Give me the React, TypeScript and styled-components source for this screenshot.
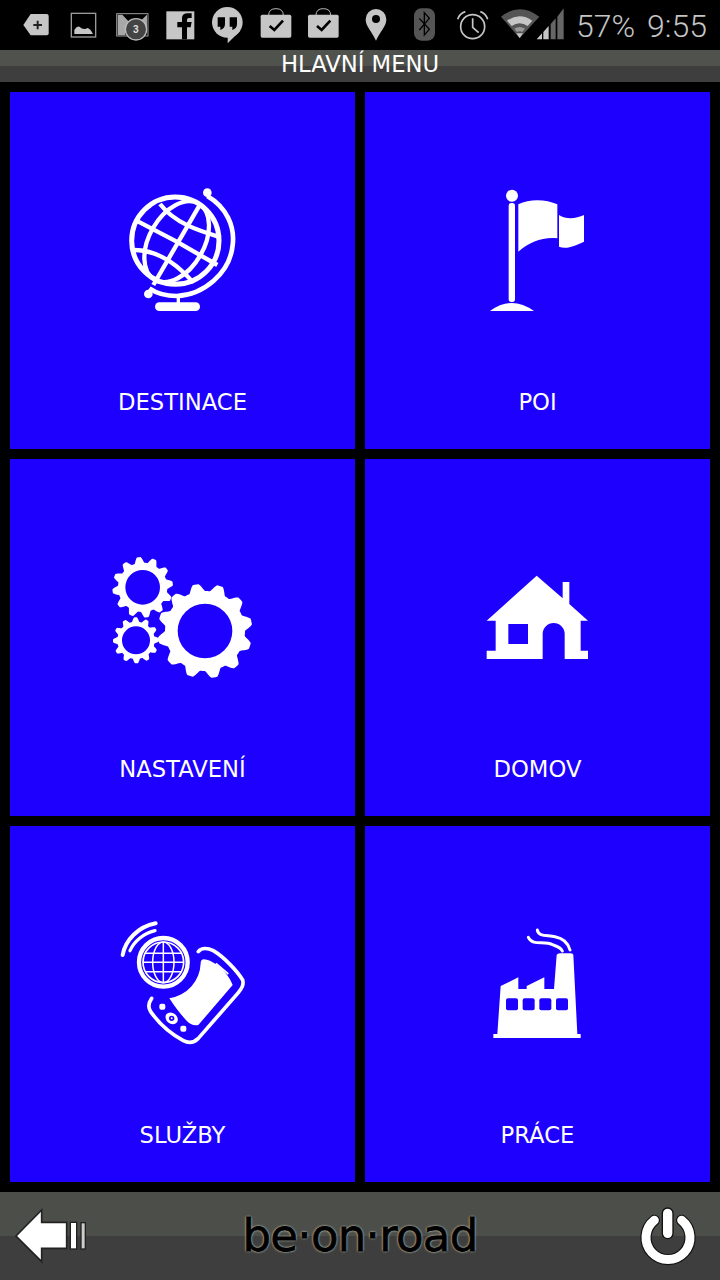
import React from "react";
import styled, { createGlobalStyle } from "styled-components";

const Global = createGlobalStyle`
  html, body { margin: 0; padding: 0; background: #000; }
  #root { width: 720px; height: 1280px; overflow: hidden; }
`;
const Page = styled.div`
  width: 720px; height: 1280px; display: flex; flex-direction: column; background: #000;
  font-family: "DejaVu Sans", sans-serif;
`;
const StatusBar = styled.div`
  height: 50px; display: flex; align-items: flex-start; padding: 0 13px 0 18px; flex: none;
  svg { display: block; overflow: visible; flex: none; }
`;
const StatusText = styled.div`
  margin-left: auto; display: flex; gap: 12px; height: 50px; align-items: center;
  font: 300 32px Roboto, sans-serif; color: #c4c4c4; padding-top: 2px; box-sizing: border-box;
`;
const Header = styled.div`
  height: 32px; flex: none; display: flex; align-items: center; justify-content: center;
  background: linear-gradient(#50524e 0 50%, #3e3e3e 50% 100%);
  color: #fff; font-size: 22.7px; line-height: 28px; padding-bottom: 5px; box-sizing: border-box;
`;
const Grid = styled.div`
  flex: none; display: grid; grid-template-columns: 345px 345px; grid-template-rows: 357px 357px 356px;
  gap: 10px; padding: 10px;
`;
const Tile = styled.div`
  background: #1e00ff; display: flex; flex-direction: column; align-items: center;
  padding: 71px 0 33px; box-sizing: border-box;
`;
const TileIcon = styled.svg`
  display: block; width: 160px; height: 160px; flex: none;
`;
const TileLabel = styled.div`
  margin-top: auto; color: #fff; font-size: 22.7px; line-height: 28px;
`;
const BottomBar = styled.div`
  flex: none; height: 88px; display: grid; grid-template-columns: 1fr auto 1fr; align-items: center;
  padding: 0 12px; background: linear-gradient(#4c4e4a 0 50%, #3e3e3e 50% 100%);
`;
const BackIcon = styled.svg`
  display: block; width: 80px; height: 64px; justify-self: start;
`;
const PowerIcon = styled.svg`
  display: block; width: 76px; height: 72px; justify-self: end;
`;
const Logo = styled.div`
  font: 400 45px "DejaVu Sans", sans-serif; color: #000; letter-spacing: -0.7px; line-height: 56px;
  -webkit-text-stroke: 0.8px #000;
  text-shadow: 0 0 1px #b4b8a8, 0 0 2px #b4b8a8, 0 0 2px #b4b8a8, 0 0 3px #a0a494;
`;

const G = "#c6c6c6";

const Slice = ({ a, b, children }: { a: number; b: number; children: React.ReactNode }) => (
  <svg width={(b - a) / 3} height={50} viewBox={`${a} 0 ${b - a} 150`}>{children}</svg>
);

const Bag = ({ x }: { x: number }) => (
  <>
    <rect x={x} y={44} width={92} height={69} rx={5} fill={G} />
    <path d={`M${x + 24} 46 Q${x + 24} 26 ${x + 46} 26 Q${x + 68} 26 ${x + 68} 46`} fill="none" stroke="#bbb" strokeWidth={3} />
    <path d={`M${x + 27} 78 L${x + 41} 90 L${x + 67} 62`} fill="none" stroke="#000" strokeWidth={8} />
  </>
);

const gear = (cx: number, cy: number, R: number, r: number, hole: number, phase: number) => {
  const pts: string[] = [];
  for (let i = 0; i < 360; i++) {
    const t = (i * Math.PI) / 180;
    const w = Math.cos(12 * (t + phase));
    const f = Math.min(1, Math.max(0, 0.5 + w * 0.7));
    const rad = r + (R - r) * f;
    pts.push(`${(cx + rad * Math.cos(t)).toFixed(1)} ${(cy + rad * Math.sin(t)).toFixed(1)}`);
  }
  return `M${pts.join("L")}Z M${cx - hole} ${cy} a${hole} ${hole} 0 1 0 ${hole * 2} 0 a${hole} ${hole} 0 1 0 ${-hole * 2} 0Z`;
};

const W = "#fff";

const GlobeArt = () => (
  <TileIcon viewBox="-21 -21 480 480">
    <g fill="none" stroke={W} strokeWidth={13}>
      <circle cx={196} cy={212} r={131} strokeWidth={15} />
      <path d="M292 78 C350 112 375 170 368 225 C360 310 280 375 200 378 C170 378 140 370 118 355" strokeWidth={14} />
      <path d="M272 100 L130 345" />
      <ellipse cx={200} cy={215} rx={82} ry={132} transform="rotate(30 200 215)" />
      <path d="M85 155 L200 215 L322 285" />
      <path d="M150 102 C195 160 265 182 332 202" />
      <path d="M72 240 C140 240 200 280 250 338" />
    </g>
    <circle cx={292} cy={68} r={13} fill={W} />
    <circle cx={115} cy={372} r={13} fill={W} />
    <rect x={200} y={378} width={10} height={24} fill={W} />
    <rect x={135} y={397} width={135} height={26} rx={13} fill={W} />
  </TileIcon>
);

const FlagArt = () => (
  <TileIcon viewBox="-36 -21 480 480">
    <g fill={W}>
      <circle cx={126} cy={77} r={18} />
      <rect x={116} y={99} width={19} height={297} rx={8} />
      <path d="M60 423 Q125 375 192 423 Z" />
      <path d="M145 103 C180 85 230 88 262 103 L262 205 C220 200 180 215 145 245 Z" />
      <path d="M267 135 C290 150 320 145 342 135 L342 215 C320 225 290 240 267 230 Z" />
    </g>
  </TileIcon>
);

const GearsArt = () => (
  <TileIcon viewBox="9 -45 480 480">
    <g fill={W} fillRule="evenodd">
      <path d={gear(128, 127, 91, 74, 52, 0.13)} />
      <path d={gear(108, 286, 69, 56, 42, 0.02)} />
      <path d={gear(315, 258, 142, 120, 82, 0.2)} />
    </g>
  </TileIcon>
);

const HouseArt = () => (
  <TileIcon viewBox="-36 -90 480 480">
    <path
      fill={W}
      fillRule="evenodd"
      d="M50 182 L200 47 L278 115 V66 H298 V132 L354 182 H332 V272 H354 V297 H284 V222 A33 33 0 0 0 218 222 V297 H50 V272 H77 V182 Z M115 192 V252 H174 V192 Z"
    />
  </TileIcon>
);

const ServicesArt = () => (
  <TileIcon viewBox="-21 -39 480 480">
    <g fill="none" stroke={W}>
      <path d="M38 135 C46 90 85 50 137 40" strokeWidth={12} strokeLinecap="round" />
      <path d="M60 122 C72 95 100 70 135 62" strokeWidth={10} strokeLinecap="round" />
      <circle cx={160} cy={157} r={73} strokeWidth={13} />
      <g strokeWidth={4.5}>
        <circle cx={160} cy={157} r={61} strokeWidth={5} />
        <ellipse cx={160} cy={157} rx={32} ry={61} />
        <path d="M160 96 V218 M105 130 H215 M99 157 H221 M105 185 H215" />
      </g>
      <path
        d="M265 125 C275 112 295 115 310 122 C340 140 380 180 398 210 C402 225 395 235 385 248 L265 385 C250 400 235 400 220 392 C180 370 150 345 122 305 C112 290 118 275 125 265"
        strokeWidth={11}
        strokeLinecap="round"
      />
      <path d="M318 160 L355 192" strokeWidth={5} />
    </g>
    <path fill={W} d="M280 148 C315 150 355 190 368 225 L265 345 C250 348 240 342 230 332 C215 317 195 292 178 265 A110 110 0 0 0 272 160 Q272 150 280 148 Z" />
    <rect x={148} y={281} width={18} height={18} rx={6} fill={W} />
    <rect x={211} y={347} width={18} height={18} rx={6} fill={W} />
    <ellipse cx={185} cy={325} rx={20} ry={16} fill={W} transform="rotate(40 185 325)" />
    <ellipse cx={185} cy={325} rx={8} ry={8} fill="#1e00ff" />
    <circle cx={185} cy={325} r={3} fill={W} />
  </TileIcon>
);

const FactoryArt = () => (
  <TileIcon viewBox="-66 -69 480 480">
    <path fill={W} d="M62 198 L115 172 V207 H140 V198 L193 172 V207 H222 L230 105 Q232 100 240 100 H272 Q280 100 280 105 L292 342 H302 V354 H40 V342 H52 Z" />
    <g fill="#1e00ff">
      <rect x={78} y={235} width={36} height={36} rx={6} />
      <rect x={128} y={235} width={36} height={36} rx={6} />
      <rect x={178} y={235} width={36} height={36} rx={6} />
      <rect x={228} y={235} width={36} height={36} rx={6} />
    </g>
    <g fill="none" stroke={W} strokeLinecap="round" strokeWidth={9}>
      <path d="M172 30 C175 50 200 45 225 50 C250 55 265 70 270 90" />
      <path d="M145 52 C160 80 190 60 220 75 C235 80 245 88 247 93" />
    </g>
  </TileIcon>
);

const tiles = [
  { label: "DESTINACE", Art: GlobeArt },
  { label: "POI", Art: FlagArt },
  { label: "NASTAVENÍ", Art: GearsArt },
  { label: "DOMOV", Art: HouseArt },
  { label: "SLUŽBY", Art: ServicesArt },
  { label: "PRÁCE", Art: FactoryArt },
];

export default function App() {
  return (
    <Page>
      <Global />
      <StatusBar>
        <Slice a={54} b={190}>
          <path d="M70 75 L92 42 H140 Q146 42 146 48 V100 Q146 106 140 106 H92 Z" fill={G} />
          <path d="M100 72 H126 V78 H100 Z M110 62 H116 V88 H110 Z" fill="#222" />
        </Slice>
        <Slice a={190} b={320}>
          <rect x={215} y={40} width={73} height={71} fill="none" stroke="#9a9a9a" strokeWidth={4} />
          <path d="M224 102 V90 Q235 72 245 85 Q255 90 264 84 Q272 86 280 102 Z" fill={G} />
        </Slice>
        <Slice a={320} b={470}>
          <rect x={349} y={41} width={94} height={67} fill="none" stroke="#9a9a9a" strokeWidth={3} />
          <path d="M352 44 H366 L398 78 L375 100 V106 H352 Z M440 44 L415 68 L440 90 Z" fill="#a8a8a8" />
          <circle cx={407} cy={88} r={32} fill="#444" stroke="#bbb" strokeWidth={4} />
          <text x={407} y={100} textAnchor="middle" fontFamily="Roboto, sans-serif" fontWeight={700} fontSize={30} fill="#ddd">3</text>
        </Slice>
        <Slice a={470} b={610}>
          <rect x={498} y={34} width={84} height={84} fill={G} />
          <path d="M545 118 V82 H531 V66 H545 V54 Q545 40 562 40 H574 V54 H566 Q560 54 560 60 V66 H574 L571 82 H560 V118 Z" fill="#000" />
        </Slice>
        <Slice a={610} b={755}>
          <circle cx={683} cy={67} r={46} fill={G} />
          <path d="M684 105 V130 L722 92 Z" fill={G} />
          <path d="M654 52 H676 V72 Q676 86 662 90 V80 H654 Z M690 52 H712 V72 Q712 86 698 90 V80 H690 Z" fill="#000" />
        </Slice>
        <Slice a={755} b={895}><Bag x={781} /></Slice>
        <Slice a={895} b={1040}><Bag x={925} /></Slice>
        <Slice a={1040} b={1200}>
          <path fillRule="evenodd" fill={G} d="M1127 122 C1115 95 1096 80 1096 58 A31 31 0 0 1 1158 58 C1158 80 1139 95 1127 122 Z M1115 57 A12 12 0 0 0 1139 57 A12 12 0 0 0 1115 57 Z" />
        </Slice>
        <Slice a={1200} b={1340}>
          <rect x={1242} y={25} width={63} height={97} rx={22} fill="#555" />
          <path d="M1258 55 L1288 88 L1273 105 V38 L1288 55 L1258 90" fill="none" stroke="#000" strokeWidth={4} />
        </Slice>
        <Slice a={1340} b={1490}>
          <g fill="none" stroke={G} strokeWidth={5}>
            <circle cx={1417} cy={80} r={36} />
            <path d="M1417 55 V82 L1435 98" />
            <path d="M1372 58 Q1378 40 1395 35 M1462 58 Q1456 40 1440 35" />
          </g>
        </Slice>
        <Slice a={1490} b={1605}>
          <path d="M1502 50 Q1558 5 1617 50 L1558 115 Z" fill="#555" />
          <path d="M1520 62 Q1558 36 1596 62 L1582 78 Q1558 62 1534 78 Z" fill={G} />
          <path d="M1542 86 Q1558 76 1574 86 L1566 96 Q1558 92 1550 96 Z" fill="#999" />
          <path d="M1548 100 H1568 L1558 114 Z" fill={G} />
        </Slice>
        <Slice a={1605} b={1710}>
          <path d="M1610 118 L1626 100 V118 Z M1630 118 V96 L1646 78 V118 Z" fill={G} />
          <path d="M1652 118 V72 L1667 55 V118 Z M1672 118 V50 L1691 25 V118 Z" fill="#666" />
        </Slice>
        <StatusText>
          <span>57%</span>
          <span>9:55</span>
        </StatusText>
      </StatusBar>
      <Header>HLAVNÍ MENU</Header>
      <Grid>
        {tiles.map(({ label, Art }) => (
          <Tile key={label}>
            <Art />
            <TileLabel>{label}</TileLabel>
          </Tile>
        ))}
      </Grid>
      <BottomBar>
        <BackIcon viewBox="36 72 240 192">
          <path d="M48 168 L125 90 V127 H200 V205 H125 V245 Z" fill={W} stroke="#222" strokeWidth={5} />
          <rect x={211} y={127} width={19} height={80} fill={W} stroke="#222" strokeWidth={4} />
          <rect x={243} y={128} width={13} height={79} fill="#ccc" stroke="#222" strokeWidth={4} />
        </BackIcon>
        <Logo>be·on·road</Logo>
        <PowerIcon viewBox="36 30 228 216">
          <g fill="none" strokeLinecap="round">
            <path d="M103 91 A66 66 0 1 0 185 91" stroke="#111" strokeWidth={34} />
            <path d="M143 70 V130" stroke="#111" strokeWidth={36} />
            <path d="M103 91 A66 66 0 1 0 185 91" stroke={W} strokeWidth={27} />
            <path d="M143 70 V130" stroke={W} strokeWidth={28} />
          </g>
        </PowerIcon>
      </BottomBar>
    </Page>
  );
}
